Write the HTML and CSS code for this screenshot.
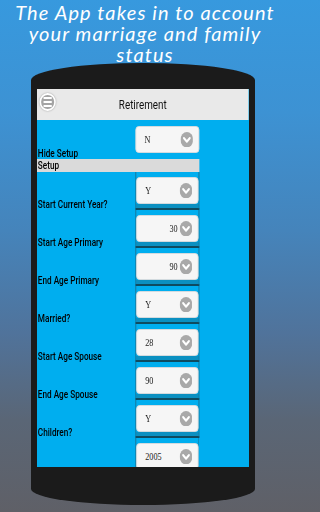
FILE: index.html
```html
<!DOCTYPE html>
<html lang="en">
<head>
<meta charset="utf-8">
<title>Retirement</title>
<link rel="stylesheet" href="styles.css">
</head>
<body>
<h2 class="tagline"><span class="line">The App takes in to account</span><span class="line">your marriage and family</span><span class="line">status</span></h2>
<div class="phone">
  <div class="screen">
    <div class="app">
      <header class="appbar">
        <span class="menu"><i></i><i></i><i></i></span>
        <h1>Retirement</h1>
        <span></span>
      </header>
      <div class="form">
        <div class="row top">
          <span class="label">Hide Setup</span>
          <div class="cell"><div class="select"><span class="val">N</span><svg class="chev" viewBox="0 0 16 16"><circle cx="8" cy="8" r="8" fill="#a9a9a9"/><path d="M4.3 6.3 8 9.9 11.7 6.3" fill="none" stroke="#fff" stroke-width="2.3" stroke-linecap="round" stroke-linejoin="round"/></svg></div></div>
        </div>
        <div class="section">Setup</div>
        <div class="row">
          <span class="label">Start Current Year?</span>
          <div class="cell"><div class="select"><span class="val">Y</span><svg class="chev" viewBox="0 0 16 16"><circle cx="8" cy="8" r="8" fill="#a9a9a9"/><path d="M4.3 6.3 8 9.9 11.7 6.3" fill="none" stroke="#fff" stroke-width="2.3" stroke-linecap="round" stroke-linejoin="round"/></svg></div></div>
        </div>
        <div class="row">
          <span class="label">Start Age Primary</span>
          <div class="cell"><div class="select right"><span class="val">30</span><svg class="chev" viewBox="0 0 16 16"><circle cx="8" cy="8" r="8" fill="#a9a9a9"/><path d="M4.3 6.3 8 9.9 11.7 6.3" fill="none" stroke="#fff" stroke-width="2.3" stroke-linecap="round" stroke-linejoin="round"/></svg></div></div>
        </div>
        <div class="row">
          <span class="label">End Age Primary</span>
          <div class="cell"><div class="select right"><span class="val">90</span><svg class="chev" viewBox="0 0 16 16"><circle cx="8" cy="8" r="8" fill="#a9a9a9"/><path d="M4.3 6.3 8 9.9 11.7 6.3" fill="none" stroke="#fff" stroke-width="2.3" stroke-linecap="round" stroke-linejoin="round"/></svg></div></div>
        </div>
        <div class="row">
          <span class="label">Married?</span>
          <div class="cell"><div class="select"><span class="val">Y</span><svg class="chev" viewBox="0 0 16 16"><circle cx="8" cy="8" r="8" fill="#a9a9a9"/><path d="M4.3 6.3 8 9.9 11.7 6.3" fill="none" stroke="#fff" stroke-width="2.3" stroke-linecap="round" stroke-linejoin="round"/></svg></div></div>
        </div>
        <div class="row">
          <span class="label">Start Age Spouse</span>
          <div class="cell"><div class="select"><span class="val">28</span><svg class="chev" viewBox="0 0 16 16"><circle cx="8" cy="8" r="8" fill="#a9a9a9"/><path d="M4.3 6.3 8 9.9 11.7 6.3" fill="none" stroke="#fff" stroke-width="2.3" stroke-linecap="round" stroke-linejoin="round"/></svg></div></div>
        </div>
        <div class="row">
          <span class="label">End Age Spouse</span>
          <div class="cell"><div class="select"><span class="val">90</span><svg class="chev" viewBox="0 0 16 16"><circle cx="8" cy="8" r="8" fill="#a9a9a9"/><path d="M4.3 6.3 8 9.9 11.7 6.3" fill="none" stroke="#fff" stroke-width="2.3" stroke-linecap="round" stroke-linejoin="round"/></svg></div></div>
        </div>
        <div class="row">
          <span class="label">Children?</span>
          <div class="cell"><div class="select"><span class="val">Y</span><svg class="chev" viewBox="0 0 16 16"><circle cx="8" cy="8" r="8" fill="#a9a9a9"/><path d="M4.3 6.3 8 9.9 11.7 6.3" fill="none" stroke="#fff" stroke-width="2.3" stroke-linecap="round" stroke-linejoin="round"/></svg></div></div>
        </div>
        <div class="row">
          <span class="label"></span>
          <div class="cell"><div class="select"><span class="val">2005</span><svg class="chev" viewBox="0 0 16 16"><circle cx="8" cy="8" r="8" fill="#a9a9a9"/><path d="M4.3 6.3 8 9.9 11.7 6.3" fill="none" stroke="#fff" stroke-width="2.3" stroke-linecap="round" stroke-linejoin="round"/></svg></div></div>
        </div>
      </div>
    </div>
  </div>
</div>
</body>
</html>
```
FILE: styles.css
```css
html, body {
  margin: 0;
  height: 512px;
}
body {
  width: 288px;
  overflow: hidden;
  background: linear-gradient(180deg, #3799de 0%, #3d92d3 22%, #4584bb 45%, #50739b 65%, #5a6676 82%, #5f6067 100%);
  font-family: Roboto, "Liberation Sans", sans-serif;
}
.tagline {
  margin: 0;
  padding: 2px 0 0 2px;
  font: italic 400 20px/21px Lato, "Open Sans", sans-serif;
  letter-spacing: 1.1px;
  color: #fff;
  text-align: center;
  white-space: nowrap;
}
.tagline .line {
  display: block;
  height: 21px;
}
.phone {
  width: 224px;
  margin: -2px 0 0 31px;
  padding: 26px 6px 38px;
  box-sizing: border-box;
  background: #1b1b1b;
  border-radius: 112px 112px 112px 112px / 17px 17px 16px 16px;
}
.screen {
  height: 378px;
  overflow: hidden;
  background: #00aeef;
}
.app {
  width: 258px;
  transform: scaleX(0.82);
  transform-origin: 0 0;
}
.appbar {
  height: 31px;
  background: #e9e9e9;
  display: grid;
  grid-template-columns: 1fr auto 1fr;
  align-items: center;
}
.menu {
  justify-self: start;
  width: 15.5px;
  height: 14px;
  margin: -5px 0 0 3px;
  border-radius: 50%;
  background: #a4a4a4;
  border: 2px solid #fff;
  box-shadow: 0 0 2px rgba(0, 0, 0, 0.35);
  display: flex;
  flex-direction: column;
  justify-content: center;
  align-items: center;
  gap: 2.4px;
}
.menu i {
  display: block;
  width: 10px;
  height: 1.6px;
  background: #fff;
}
.appbar h1 {
  margin: 0;
  font: 400 12px/1 Roboto, sans-serif;
  color: #111;
}
.row {
  display: grid;
  grid-template-columns: 120px 78px;
  height: 38px;
}
.label {
  align-self: end;
  padding-left: 1px;
  font-size: 10px;
  font-weight: 500;
  line-height: 10px;
  color: #000;
  white-space: nowrap;
}
.cell {
  border-left: 1px solid #1a6d8c;
  border-right: 1px solid #1a6d8c;
  border-bottom: 2px solid #0f4b60;
  padding-top: 5px;
  background: linear-gradient(to bottom, transparent 32px, #0b90c1 32px);
}
.row.top {
  height: 39px;
}
.row.top .cell {
  border: 0;
  padding-top: 6px;
  background: none;
}
.section {
  width: 198px;
  height: 13px;
  box-sizing: border-box;
  padding-left: 1px;
  background: #dadada;
  font-size: 10px;
  font-weight: 500;
  line-height: 13px;
  color: #000;
}
.select {
  height: 27px;
  box-sizing: border-box;
  display: flex;
  align-items: center;
  padding: 0 7px 0 10px;
  background: #f6f6f6;
  border: 1px solid #dcdcdc;
  border-radius: 4px;
  font: 10px "Liberation Serif", serif;
  color: #222;
}
.select .val {
  flex: 1;
}
.select.right .val {
  text-align: right;
  margin-right: 2px;
}
.chev {
  width: 15.5px;
  height: 15.5px;
  flex: none;
}
```
